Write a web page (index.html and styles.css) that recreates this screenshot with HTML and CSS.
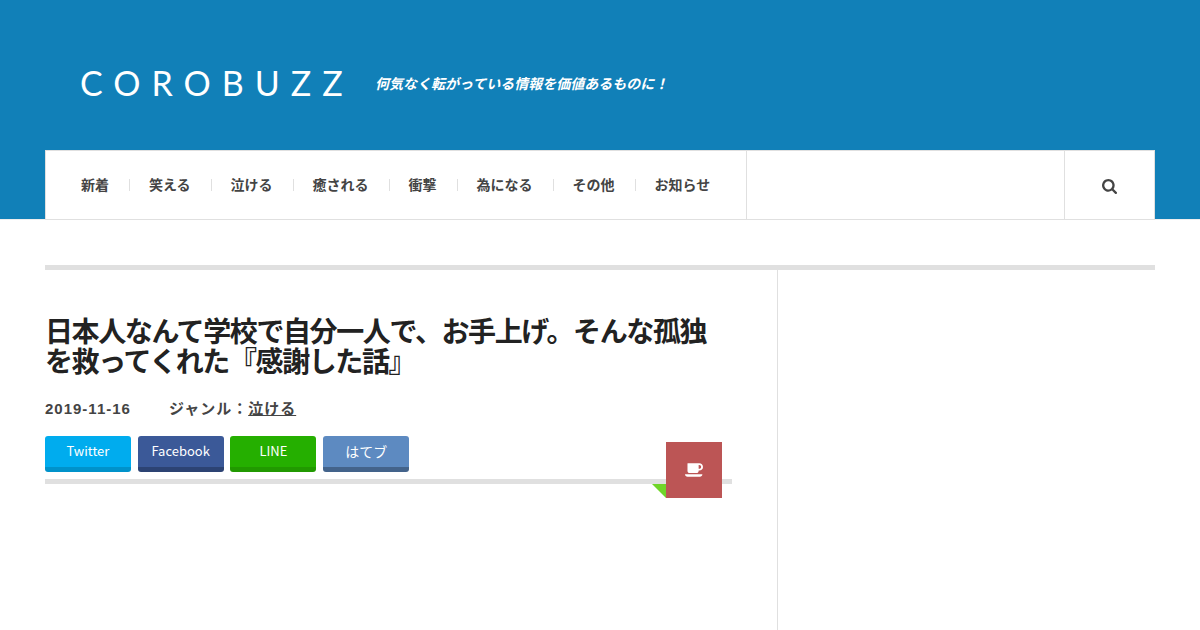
FILE: index.html
```
<!DOCTYPE html>
<html lang="ja">
<head>
  <meta charset="utf-8">
  <meta name="viewport" content="width=device-width, initial-scale=1">
  <title>COROBUZZ</title>
  <link rel="stylesheet" href="styles.css">
</head>
<body>
  <header class="site-header">
    <div class="container">
      <div class="branding">
        <a href="#" class="logo">COROBUZZ</a>
        <p class="tagline">何気なく転がっている情報を価値あるものに！</p>
      </div>
      <div class="nav-bar">
        <nav class="main-nav">
          <ul>
            <li><a href="#">新着</a></li>
            <li><a href="#">笑える</a></li>
            <li><a href="#">泣ける</a></li>
            <li><a href="#">癒される</a></li>
            <li><a href="#">衝撃</a></li>
            <li><a href="#">為になる</a></li>
            <li><a href="#">その他</a></li>
            <li><a href="#">お知らせ</a></li>
          </ul>
        </nav>
        <button type="button" class="search-btn" aria-label="検索">
          <svg viewBox="64 128 1664 1664" width="15" height="15" fill="currentColor"><path d="M1216 832q0-185-131.5-316.5t-316.5-131.5-316.5 131.5-131.5 316.5 131.5 316.5 316.5 131.5 316.5-131.5 131.5-316.5zm512 832q0 52-38 90t-90 38q-54 0-90-38l-343-342q-179 124-399 124-143 0-273.5-55.5t-225-150-150-225-55.5-273.5 55.5-273.5 150-225 225-150 273.5-55.5 273.5 55.5 225 150 150 225 55.5 273.5q0 220-124 399l343 343q37 37 37 90z"/></svg>
        </button>
      </div>
    </div>
  </header>

  <div class="container page">
    <main class="content">
      <article>
        <header class="post-header">
          <h1>日本人なんて学校で自分一人で、お手上げ。そんな孤独を救ってくれた『感謝した話』</h1>
          <div class="post-meta">
            <time datetime="2019-11-16">2019-11-16</time>
            <span>ジャンル：<a href="#">泣ける</a></span>
          </div>
          <div class="share">
            <a href="#" class="share-btn twitter">Twitter</a>
            <a href="#" class="share-btn facebook">Facebook</a>
            <a href="#" class="share-btn line">LINE</a>
            <a href="#" class="share-btn hatena">はてブ</a>
          </div>
          <span class="format-badge">
            <svg viewBox="0 512 1856 1408" width="18" height="14" fill="currentColor"><path d="M1664 896q0-80-56-136t-136-56h-64v384h64q80 0 136-56t56-136zm-1664 768h1792q0 106-75 181t-181 75h-1280q-106 0-181-75t-75-181zm1856-768q0 159-112.5 271.5t-271.5 112.5h-64v32q0 92-66 158t-158 66h-704q-92 0-158-66t-66-158v-736q0-26 19-45t45-19h1152q159 0 271.5 112.5t112.5 271.5z"/></svg>
          </span>
        </header>
      </article>
    </main>
    <aside class="sidebar"></aside>
  </div>
</body>
</html>
```
FILE: styles.css
```
* {
  box-sizing: border-box;
}
body {
  display: flex;
  flex-direction: column;
  min-height: 100vh;
  margin: 0;
  font-family: "Liberation Sans", Arial, "Noto Sans CJK JP", sans-serif;
  font-size: 14px;
  color: #444;
  background-color: #fff;
}
a {
  color: inherit;
}
.container {
  width: 100%;
  max-width: 1200px;
  margin: 0 auto;
  padding: 0 45px;
}

/* Header */
.site-header {
  background: linear-gradient(to top, #eee 1px, #1180b8 1px);
}
.branding {
  display: flex;
  align-items: center;
  height: 150px;
  padding: 16px 35px 0;
}
.logo {
  width: 295px;
  font-family: Lato, sans-serif;
  font-size: 34px;
  line-height: 40px;
  letter-spacing: 11px;
  color: #fff;
  text-decoration: none;
}
.tagline {
  margin: 0;
  font-size: 14px;
  font-weight: bold;
  font-style: italic;
  color: #fff;
}

/* Navigation */
.nav-bar {
  display: flex;
  min-height: 70px;
  background-color: #fff;
  border: 1px solid #e0e0e0;
}
.main-nav {
  display: flex;
  align-items: center;
  padding: 0 16px;
  border-right: 1px solid #e0e0e0;
}
.main-nav ul {
  display: flex;
  flex-wrap: wrap;
  margin: 0;
  padding: 0;
  list-style: none;
}
.main-nav li {
  padding: 0 20px 0 19px;
  border-right: 1px solid #e0e0e0;
  height: 12px;
  line-height: 12px;
}
.main-nav li:last-child {
  border-right: none;
}
.main-nav a {
  font-weight: bold;
  text-decoration: none;
}
.search-btn {
  display: flex;
  align-items: center;
  justify-content: center;
  width: 90px;
  margin-left: auto;
  padding: 2px 0 0;
  border: none;
  border-left: 1px solid #e0e0e0;
  background: none;
  color: #444;
  cursor: pointer;
}

/* Page columns */
.page {
  display: flex;
  flex: 1;
  padding-top: 45px;
}
.content {
  flex: 1;
  padding: 45px 45px 0 0;
  border-top: 5px solid #e0e0e0;
}
.sidebar {
  width: 378px;
  border-top: 5px solid #e0e0e0;
  position: relative;
}
.sidebar::before {
  content: "";
  position: absolute;
  top: 0;
  bottom: 0;
  left: 0;
  border-left: 1px solid #e0e0e0;
}

/* Post */
.post-header {
  position: relative;
  padding-bottom: 7px;
  border-bottom: 5px solid #e0e0e0;
}
.post-header h1 {
  margin: 0 0 20px;
  font-family: "Noto Sans CJK JP", sans-serif;
  font-size: 28px;
  line-height: 30px;
  letter-spacing: -0.05em;
  color: #222;
}
.post-meta {
  display: flex;
  gap: 38px;
  margin-bottom: 14px;
  font-size: 15px;
  line-height: 27px;
  font-weight: bold;
  letter-spacing: 1px;
}
.share {
  display: flex;
  gap: 1%;
}
.share-btn {
  width: 12.5%;
  height: 36px;
  border-bottom: 5px solid;
  border-radius: 3px;
  font-family: "Noto Sans CJK JP", sans-serif;
  font-size: 13px;
  line-height: 30px;
  text-align: center;
  text-decoration: none;
  color: #fff;
}
.twitter {
  background-color: #00acee;
  border-color: #0092ca;
}
.facebook {
  background-color: #3b5998;
  border-color: #2c4373;
}
.line {
  background-color: #25af00;
  border-color: #219900;
}
.hatena {
  background-color: #5d8ac1;
  border-color: #43638b;
  font-size: 14px;
}

/* Badge hanging over the rule, with its folded corner */
.format-badge {
  position: absolute;
  right: 10px;
  bottom: -19px;
  display: flex;
  align-items: center;
  justify-content: center;
  width: 56px;
  height: 56px;
  background-color: #bc5555;
  color: #fff;
}
.format-badge::before {
  content: "";
  position: absolute;
  left: -14px;
  bottom: 0;
  border-top: 14px solid #70d529;
  border-left: 14px solid transparent;
}
```
